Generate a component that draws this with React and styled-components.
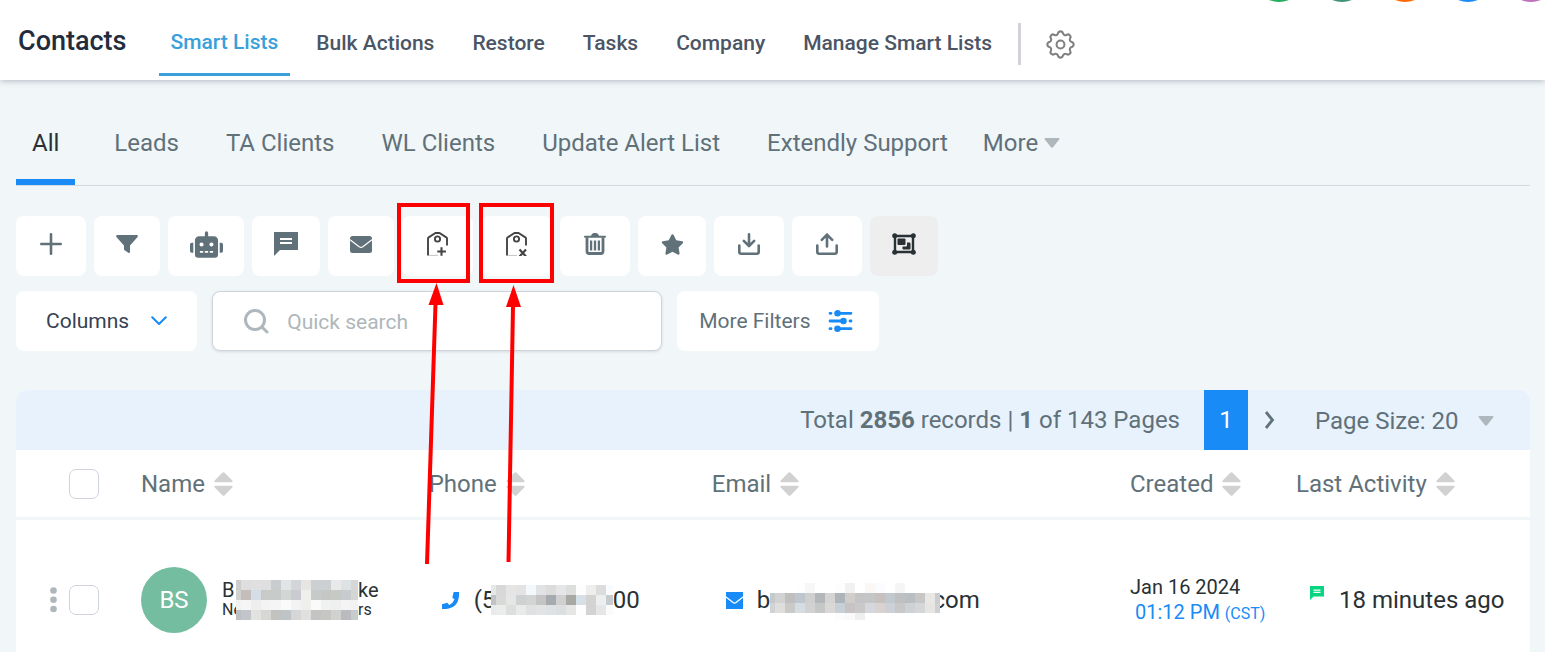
import React from "react";
import styled, { createGlobalStyle } from "styled-components";
import { FaRobot, FaStar } from "react-icons/fa";

const color = {
  page: "#f1f6f9",
  blue: "#188bf6",
  sky: "#38a0db",
  slate: "#607179",
  ink: "#2a3135",
  nav: "#4b5565",
  line: "#d3dadf",
  border: "#cfd3dc",
  muted: "#aeb7bb",
};

const GlobalStyle = createGlobalStyle`
  * { box-sizing: border-box; }
  body {
    margin: 0;
    background: ${color.page};
    color: ${color.slate};
    font-family: Roboto, "Liberation Sans", sans-serif;
    font-size: 24px;
    line-height: 28px;
  }
  button, input, select {
    font: inherit;
    color: inherit;
    margin: 0;
    padding: 0;
    border: 0;
    background: none;
  }
  a { color: inherit; text-decoration: none; }
  svg { display: block; flex: none; }
`;

const Shell = styled.div`
  position: relative;
  height: 100vh;
  overflow: hidden;
`;

/* ---------- header ---------- */

const Header = styled.header`
  position: relative;
  display: flex;
  align-items: center;
  height: 80px;
  padding: 0 18px;
  background: #fff;
  box-shadow: 0 1px 6px rgba(60, 75, 85, 0.35);
`;

const Title = styled.h1`
  margin: 0 32px 0 0;
  padding-top: 2px;
  color: #222c3c;
  font-size: 27px;
  font-weight: 500;
  line-height: 32px;
`;

const MainNav = styled.nav`
  display: flex;
  align-self: stretch;
  gap: 14px;
`;

const NavLink = styled.a`
  display: flex;
  align-items: center;
  height: 76px;
  padding: ${(p) => (p.$active ? 10 : 12)}px 12px 0;
  border-bottom: 3px solid ${(p) => (p.$active ? color.sky : "transparent")};
  color: ${(p) => (p.$active ? color.sky : color.nav)};
  font-size: 21px;
  font-weight: 500;
  line-height: 24px;
  white-space: nowrap;
`;

const Divider = styled.span`
  width: 3px;
  height: 42px;
  margin: 8px 22px 0 14px;
  background: #d1d3d8;
`;

const PlainButton = styled.button`
  display: inline-flex;
  align-items: center;
  cursor: pointer;
`;

const SettingsButton = styled(PlainButton)`
  margin-top: 8px;
`;

const TopActions = styled.div`
  position: absolute;
  top: 0;
  right: -10px;
  display: flex;
  align-items: flex-end;
  gap: 15px;
  height: 2px;
  overflow: hidden;
`;

const TopDot = styled.span`
  width: 48px;
  height: 48px;
  border-radius: 50%;
  background: ${(p) => p.$fill};
`;

/* ---------- list tabs ---------- */

const Main = styled.main`
  padding: 0 15px 0 16px;
`;

const Tabs = styled.nav`
  display: flex;
  gap: 15px;
  height: 106px;
  padding-top: 20px;
  border-bottom: 1px solid ${color.line};
`;

const Tab = styled.a`
  display: flex;
  align-items: center;
  padding: 6px 16px 0;
  margin-right: ${(p) => (p.$active ? 8 : 0)}px;
  border-bottom: 6px solid ${(p) => (p.$active ? color.blue : "transparent")};
  color: ${(p) => (p.$active ? color.ink : color.slate)};
  white-space: nowrap;
`;

const MoreTab = styled(PlainButton)`
  gap: 6px;
  padding-left: 4px;
`;

/* ---------- toolbars ---------- */

const Toolbar = styled.div`
  display: flex;
  gap: 8px;
  padding-top: 30px;
`;

const ToolButton = styled.button`
  display: flex;
  align-items: center;
  justify-content: center;
  width: ${(p) => p.$width}px;
  height: 60px;
  padding-bottom: 4px;
  border-radius: 8px;
  background: ${(p) => (p.$pressed ? "#eeeeee" : "#fff")};
  color: ${(p) => (p.$pressed ? color.ink : color.slate)};
  cursor: pointer;
`;

const FilterBar = styled.div`
  display: flex;
  gap: 15px;
  padding: 15px 0 39px;
`;

const WideButton = styled.button`
  display: flex;
  align-items: center;
  gap: ${(p) => p.$gap}px;
  height: 60px;
  padding: ${(p) => p.$pad};
  border-radius: 8px;
  background: #fff;
  color: ${(p) => p.$tone};
  font-size: 21px;
  line-height: 24px;
  white-space: nowrap;
  cursor: pointer;
`;

const SearchBox = styled.label`
  display: flex;
  align-items: center;
  gap: 18px;
  width: 450px;
  height: 60px;
  padding: 0 30px;
  border: 1px solid ${color.border};
  border-radius: 8px;
  background: #fff;
  box-shadow: 0 1px 3px rgba(60, 75, 85, 0.15);
`;

const SearchInput = styled.input`
  flex: 1;
  min-width: 0;
  padding-top: 2px;
  outline: none;
  font-size: 21px;
  line-height: 24px;
  &::placeholder {
    color: ${color.muted};
    opacity: 1;
  }
`;

/* ---------- table ---------- */

const Panel = styled.section`
  background: #fff;
  border-radius: 10px 10px 0 0;
  overflow: hidden;
`;

const PagerBar = styled.div`
  display: flex;
  align-items: center;
  justify-content: flex-end;
  height: 60px;
  padding-right: 36px;
  background: #e8f2fd;
`;

const PageNumber = styled.button`
  align-self: stretch;
  width: 44px;
  margin: 0 16px 0 24px;
  background: ${color.blue};
  color: #fff;
  cursor: pointer;
`;

const PageSize = styled.label`
  display: flex;
  align-items: center;
  gap: 19px;
  margin-left: 39px;
  padding-top: 2px;
`;

const PageSelect = styled.select`
  appearance: none;
  outline: none;
  cursor: pointer;
`;

const Table = styled.table`
  width: 100%;
  table-layout: fixed;
  border-spacing: 0;
`;

const Col = styled.col`
  width: ${(p) => p.$width};
`;

const HeadCell = styled.th`
  height: 70px;
  padding: 0 0 0 ${(p) => p.$indent || 0}px;
  border-bottom: 3px solid ${color.page};
  font-weight: 400;
  text-align: left;
  vertical-align: middle;
`;

const SortButton = styled(PlainButton)`
  gap: 9px;
  white-space: nowrap;
`;

const Cell = styled.td`
  height: 160px;
  padding: 0 0 0 ${(p) => p.$indent || 0}px;
  color: ${color.ink};
  vertical-align: middle;
  white-space: nowrap;
`;

const Line = styled.div`
  display: flex;
  align-items: ${(p) => (p.$top ? "flex-start" : "center")};
  gap: ${(p) => p.$gap || 0}px;
`;

const Check = styled.input`
  appearance: none;
  display: block;
  width: 30px;
  height: 30px;
  border: 1px solid ${color.border};
  border-radius: 7px;
  background: #fff;
  &:checked { background: ${color.blue}; }
`;

const Avatar = styled.span`
  display: flex;
  align-items: center;
  justify-content: center;
  width: 66px;
  height: 66px;
  border-radius: 50%;
  background: #74bda0;
  color: #fff;
`;

const NameText = styled.div`
  display: grid;
  grid-template-columns: 14px auto auto;
  grid-template-rows: 20px 20px;
  line-height: 20px;
`;

const MaskedBlock = styled.span`
  grid-row: 1 / span 2;
  grid-column: 2;
`;

const Patch = styled.svg`
  position: relative;
  z-index: 1;
`;

/* A piece of text that may run on under the patch beside it. */
const Piece = styled.span`
  display: flex;
  justify-content: ${(p) => (p.$end ? "flex-end" : "flex-start")};
  width: ${(p) => (p.$width ? p.$width + "px" : "auto")};
  font-size: ${(p) => p.$size || 24}px;
`;

const DateText = styled.div`
  font-size: 20px;
  line-height: 25px;
`;

const TimeText = styled(DateText)`
  padding-left: 5px;
  color: ${color.blue};
  small { font-size: 16px; }
`;

const Annotation = styled.svg`
  position: absolute;
  top: 0;
  left: 0;
  z-index: 2;
  pointer-events: none;
`;

/* ---------- icons ---------- */

const Caret = () => (
  <svg width="16" height="10" viewBox="0 0 16 10" fill={color.muted}>
    <path d="M1.5 0h13q1.6.2.7 1.6L9.2 9Q8 10.400 6.800 9L.8 1.600Q-.1.2 1.500 0z" />
  </svg>
);

const SortIcon = () => (
  <svg width="19" height="24" viewBox="0 0 19 24" fill="#d1d1d1">
    <path d="M8.300.8Q9.500-.3 10.700.8l7.600 7.700q.9 1.500-.7 1.800H1.400Q-.2 10 .7 8.500zM8.300 23.200q1.200 1.100 2.400 0l7.600-7.700q.9-1.500-.7-1.800H1.400q-1.600.3-.7 1.800z" />
  </svg>
);

const GearIcon = () => (
  <svg width="35" height="35" viewBox="0 0 24 24" fill="none" stroke="#808080" strokeWidth="1.400" strokeLinejoin="round">
    <path d="M10.325 4.317c.426-1.756 2.924-1.756 3.350 0a1.724 1.724 0 002.573 1.066c1.543-.94 3.310.826 2.370 2.370a1.724 1.724 0 001.065 2.572c1.756.426 1.756 2.924 0 3.350a1.724 1.724 0 00-1.066 2.573c.94 1.543-.826 3.310-2.370 2.370a1.724 1.724 0 00-2.572 1.065c-.426 1.756-2.924 1.756-3.350 0a1.724 1.724 0 00-2.573-1.066c-1.543.94-3.310-.826-2.370-2.370a1.724 1.724 0 00-1.065-2.572c-1.756-.426-1.756-2.924 0-3.350a1.724 1.724 0 001.066-2.573c-.94-1.543.826-3.310 2.370-2.370.996.608 2.296.07 2.572-1.065z" />
    <circle cx="12" cy="12" r="2.700" />
  </svg>
);

const PlusIcon = () => (
  <svg width="22" height="22" viewBox="0 0 22 22" stroke="currentColor" strokeWidth="2.600" strokeLinecap="round">
    <path d="M11 1.300v19.400M1.300 11h19.400" />
  </svg>
);

const FunnelIcon = () => (
  <svg width="22" height="18" viewBox="0 0 22 18" fill="currentColor">
    <path d="M1 0h20q1.300.6.6 1.900L14 10.500V17q-.3 1.400-1.600.7L8.600 15.200Q8 14.800 8 14v-3.500L.4 1.900Q-.3.6 1 0z" />
  </svg>
);

const MessageIcon = ({ size, fill }) => (
  <svg width={size} height={size} viewBox="0 0 24 24" fill={fill || "currentColor"}>
    <path d="M0 0h24v18H6l-6 6z" />
    <path d="M6 7h12M6 11h12" stroke="#fff" strokeWidth="2" />
  </svg>
);

const EnvelopeIcon = () => (
  <svg width="22" height="17" viewBox="0 0 22 17">
    <rect width="22" height="17" rx="2.500" fill="currentColor" />
    <path d="M0 3.800l9.200 7q1.800 1.300 3.600 0l9.200-7" fill="none" stroke="#fff" strokeWidth="1.200" />
  </svg>
);

const TagIcon = ({ mark }) => (
  <svg width="23" height="24" viewBox="0 0 23 24" fill="none" stroke="#454545" strokeWidth="1.900">
    <path d="M2 23.500V6.600Q2 5.800 2.700 5.400L9.500 1h4l6.800 4.400q.7.400.7 1.200V13.500" />
    <circle cx="11.500" cy="7" r="2.600" />
    <path d="M3 23.400h9" strokeWidth="1" stroke="#c4c4c4" />
    {mark === "plus" ? (
      <path d="M15.500 15.300v8.400M11.300 19.500h8.600" strokeWidth="2.100" />
    ) : (
      <path d="M14.500 17.500l6.500 7M21 17.500l-6.500 7" strokeWidth="2.200" />
    )}
  </svg>
);

const TrashIcon = () => (
  <svg width="22" height="22" viewBox="0 0 22 22" fill="none" stroke="currentColor">
    <path d="M1 3.800h20" strokeWidth="2" strokeLinecap="round" />
    <path d="M7.500 3.500Q7.800.5 9.500.5h3q1.700 0 2 3z" fill="currentColor" />
    <path d="M3 4.500v13.700q0 2.300 2.300 2.300h11.400q2.300 0 2.300-2.300V4.500" strokeWidth="2.800" />
    <path d="M7.100 7.500v10M11 7.500v10M14.900 7.500v10" strokeWidth="2.300" />
  </svg>
);

const TransferIcon = ({ up }) => (
  <svg width="22" height="22" viewBox="0 0 22 22" fill="none" stroke="currentColor" strokeWidth="2.600" strokeLinecap="round" strokeLinejoin="round">
    <path d="M1.300 12.500v6.200q0 2 2 2h15.400q2 0 2-2v-6.200" />
    <path d={up ? "M11 13.500V1.600M5.800 6.800L11 1.600l5.200 5.200" : "M11 1.300v11.800M5.800 7.800L11 13l5.200-5.200"} />
  </svg>
);

const GroupIcon = () => (
  <svg width="24" height="22" viewBox="0 0 24 22" fill="currentColor">
    <path d="M3 3h18v16H3z" fill="none" stroke="currentColor" strokeWidth="2.400" />
    <circle cx="2.700" cy="2.700" r="2.500" />
    <circle cx="21.300" cy="2.700" r="2.500" />
    <circle cx="2.700" cy="19.300" r="2.500" />
    <circle cx="21.300" cy="19.300" r="2.500" />
    <rect x="5.500" y="5.500" width="8" height="6.500" rx="1" />
    <path d="M15 9.500h2.500q1 0 1 1v5q0 1-1 1h-6q-1 0-1-1V13.500H14q1 0 1-1z" />
  </svg>
);

const ChevronDown = () => (
  <svg width="16" height="10" viewBox="0 0 16 10" fill="none" stroke={color.blue} strokeWidth="2" strokeLinecap="round" strokeLinejoin="round">
    <path d="M1.200 1.200L8 8l6.800-6.800" />
  </svg>
);

const ChevronRight = () => (
  <svg width="12" height="18" viewBox="0 0 12 18" fill="none" stroke={color.slate} strokeWidth="2.800">
    <path d="M2 1l6.500 8L2 17" />
  </svg>
);

const SearchIcon = () => (
  <svg width="26" height="26" viewBox="0 0 26 26" fill="none" stroke={color.muted} strokeWidth="3" strokeLinecap="round">
    <circle cx="12" cy="12" r="9.500" />
    <path d="M19 19l5 5" />
  </svg>
);

const SlidersIcon = () => (
  <svg width="25" height="22" viewBox="0 0 25 22" fill={color.blue} stroke={color.blue} strokeWidth="2.800" strokeLinecap="round">
    <path d="M2 3.300h1M10 3.300h13M2 11h13M22 11h1M2 18.700h1M10 18.700h13" />
    <circle cx="9.500" cy="3.300" r="1.900" />
    <circle cx="15.500" cy="11" r="1.900" />
    <circle cx="9.500" cy="18.700" r="1.900" />
  </svg>
);

const DotsIcon = () => (
  <svg width="7" height="26" viewBox="0 0 7 26" fill={color.muted}>
    <circle cx="3.500" cy="3.500" r="3.300" />
    <circle cx="3.500" cy="12.700" r="3.300" />
    <circle cx="3.500" cy="22" r="3.300" />
  </svg>
);

const PhoneIcon = () => (
  <svg width="17" height="17" viewBox="0 0 17 17" fill={color.blue}>
    <path d="M11.700 0H17v3.600Q16.400 15.800 4 17H0v-4.700l5.300-1.500 1.900 2.200q3.600-1.700 5.300-5.600L10.300 5.500z" />
  </svg>
);

const MailIcon = () => (
  <svg width="17" height="17" viewBox="0 0 17 17">
    <path d="M0 0h17v17H0z" fill={color.blue} />
    <path d="M0 5l7 5.500q1.500 1.100 3 0L17 5" fill="none" stroke="#fff" strokeWidth="1.300" />
  </svg>
);

/* A pixelated patch that hides private data; each row is a list of cell colours. */
const Mosaic = ({ rows, last, top = 0 }) => {
  const width = 5 + (rows[0].length - 2) * 10 + last;
  const height = rows.length * 10;
  return (
    <Patch width={width} height={height} viewBox={`0 ${-top} ${width} ${height}`} shapeRendering="crispEdges">
      {rows.map((row, r) =>
        row.map((fill, c) => (
          <rect
            key={r + "-" + c}
            x={c === 0 ? 0 : c * 10 - 5}
            y={r * 10}
            width={c === 0 ? 5 : c === row.length - 1 ? last : 10}
            height="10"
            fill={"#" + fill}
          />
        ))
      )}
    </Patch>
  );
};

const cells = (text) => text.split(" ");

const nameCells = [
  cells("cdcecb dededf e0e0e1 dedfe1 c8cccd e1e5e6 d3d5d9 e6e5e1 cdd0d2 cdd0d3 e8e9e8 dde2e5 d6d7d6"),
  cells("d0d2cf c3bebb d5dde6 c8cac8 c7cbc9 d3d7d3 cacbd1 efefee c8cac9 c5c7c4 c7c9c5 c8cbce d5d6d4"),
  cells("f2f4f2 f5f5f6 edefef f2f3f2 f5f5f5 f9fafa f3f3f3 efefec fafafa f0f1f1 efefef f4f4f4 f2f2f2"),
  cells("bcc0c2 c2c5c9 e2e3e1 d7d8d6 c2c3c0 bfc4c8 d6d6d6 e0e0e0 c4c4c3 c6c7c5 d1d2cf b9bbbf c6cbcd"),
];

const phoneCells = [
  cells("e6e7e7 d8d8d8 e5e5e5 e3e3e3 f3f8fc e0e2e3 dcdcdd e6e6e8 dcdedb fdfdfd eeefed dcdcdc f9fbfc"),
  cells("bfc3c6 d9d9d7 e5e7e6 cdd1d2 d2d4d4 c4c4c4 a5abae cfd0cf a9a9a4 d8e0e7 d3d3d2 edeef0 c5cbce"),
  cells("e9eaea ebecec dededd e9ebea e1e1e1 e2e3e5 dfe2e4 dcdfe1 e6e6e5 fefefe d3d3d3 e6e6e6 fafcfc"),
];

const emailCells = [
  cells("fff fff fff fefefc f7f7f7 fff fff fdfdfd f1f1f2 fff faf7f4 fafcff fff f5f5f5 fff fff fff fff"),
  cells("c4c9cb d2d2d2 bfbfbf bfc6ce cfcfcf b3b7b9 d5d4d2 adb5bb d0cdcb c2c4c6 c3c5c6 c6c1bf c2c9ce bfc0c1 b8bec2 c8c7c6 e9e8e5 c9cdcf"),
  cells("cfd3d5 dfdedd c9c9c8 d6dde0 d2d2d2 c6c7c7 d9d8d6 c8d0d7 c7c3c5 c9c9c9 d5d7dc d8d3d1 cdd0d5 c8c8c8 cfd2d4 d5d6d8 e7e5e1 ccd1d3"),
  cells("fff fff fff fff fff fff fff fcfcfc fafafa eeeff0 fff fff fff fff fff fff fff fff"),
];

/* ---------- data ---------- */

const navItems = ["Smart Lists", "Bulk Actions", "Restore", "Tasks", "Company", "Manage Smart Lists"];
const tabItems = ["All", "Leads", "TA Clients", "WL Clients", "Update Alert List", "Extendly Support"];
const topDots = ["#24ad5c", "#3f9377", "#ff6a00", "#188bf6", "#c070bd"];

const tools = [
  { label: "Add contact", width: 70, icon: <PlusIcon /> },
  { label: "Filter", width: 66, icon: <FunnelIcon /> },
  { label: "Automation", width: 76, icon: <FaRobot size={33} /> },
  { label: "Send SMS", width: 68, icon: <MessageIcon size={24} /> },
  { label: "Send email", width: 66, icon: <EnvelopeIcon /> },
  { label: "Add tag", width: 71, icon: <TagIcon mark="plus" /> },
  { label: "Remove tag", width: 71, icon: <TagIcon mark="cross" /> },
  { label: "Delete", width: 70, icon: <TrashIcon /> },
  { label: "Review request", width: 68, icon: <FaStar size={23} /> },
  { label: "Export", width: 70, icon: <TransferIcon /> },
  { label: "Import", width: 70, icon: <TransferIcon up /> },
  { label: "Merge", width: 68, icon: <GroupIcon />, pressed: true },
];

const columns = ["Name", "Phone", "Email", "Created", "Last Activity"];

export default function App() {
  return (
    <>
      <GlobalStyle />
      <Shell>
        <Header>
          <Title>Contacts</Title>
          <MainNav>
            {navItems.map((item, i) => (
              <NavLink key={item} href="#" $active={i === 0}>{item}</NavLink>
            ))}
          </MainNav>
          <Divider />
          <SettingsButton aria-label="Settings"><GearIcon /></SettingsButton>
          <TopActions>
            {topDots.map((fill) => <TopDot key={fill} $fill={fill} />)}
          </TopActions>
        </Header>

        <Main>
          <Tabs>
            {tabItems.map((item, i) => (
              <Tab key={item} href="#" $active={i === 0}>{item}</Tab>
            ))}
            <MoreTab>More <Caret /></MoreTab>
          </Tabs>

          <Toolbar>
            {tools.map((t) => (
              <ToolButton key={t.label} aria-label={t.label} $width={t.width} $pressed={t.pressed}>
                {t.icon}
              </ToolButton>
            ))}
          </Toolbar>

          <FilterBar>
            <WideButton $gap={22} $pad="0 30px" $tone="#364152">Columns <ChevronDown /></WideButton>
            <SearchBox>
              <SearchIcon />
              <SearchInput type="text" placeholder="Quick search" aria-label="Quick search" />
            </SearchBox>
            <WideButton $gap={17} $pad="0 26px 0 22px" $tone={color.slate}>More Filters <SlidersIcon /></WideButton>
          </FilterBar>

          <Panel>
            <PagerBar>
              <span>Total <b>2856</b> records | <b>1</b> of 143 Pages</span>
              <PageNumber>1</PageNumber>
              <PlainButton aria-label="Next page"><ChevronRight /></PlainButton>
              <PageSize>
                <PageSelect aria-label="Page size">
                  <option>Page Size: 20</option>
                </PageSelect>
                <Caret />
              </PageSize>
            </PagerBar>

            <Table>
              <colgroup>
                <Col $width="125px" />
                <Col $width="19%" />
                <Col $width="18.7%" />
                <Col $width="auto" />
                <Col $width="166px" />
                <Col $width="234px" />
              </colgroup>
              <thead>
                <tr>
                  <HeadCell $indent={53}><Check type="checkbox" aria-label="Select all" /></HeadCell>
                  {columns.map((c) => (
                    <HeadCell key={c}><SortButton>{c} <SortIcon /></SortButton></HeadCell>
                  ))}
                </tr>
              </thead>
              <tbody>
                <tr>
                  <Cell $indent={34}>
                    <Line $gap={12}>
                      <PlainButton aria-label="Row actions"><DotsIcon /></PlainButton>
                      <Check type="checkbox" aria-label="Select contact" />
                    </Line>
                  </Cell>
                  <Cell>
                    <Line $gap={15}>
                      <Avatar>BS</Avatar>
                      <NameText>
                        <Piece $size={20}>B</Piece>
                        <Piece $size={20}>ke</Piece>
                        <MaskedBlock><Mosaic rows={nameCells} last={7} /></MaskedBlock>
                        <Piece $size={16}>Ne</Piece>
                        <Piece $size={16}>rs</Piece>
                      </NameText>
                    </Line>
                  </Cell>
                  <Cell $indent={13}>
                    <Line $gap={15}>
                      <PhoneIcon />
                      <Line>
                        <Piece $width={17}>(5</Piece>
                        <Mosaic rows={phoneCells} last={7} />
                        <Piece>00</Piece>
                      </Line>
                    </Line>
                  </Cell>
                  <Cell $indent={14}>
                    <Line $gap={14}>
                      <MailIcon />
                      <Line>
                        <Piece $width={13}>b</Piece>
                        <Mosaic rows={emailCells} last={5} top={3} />
                        <Piece $end $width={40}>com</Piece>
                      </Line>
                    </Line>
                  </Cell>
                  <Cell>
                    <DateText>Jan 16 2024</DateText>
                    <TimeText>01:12 PM <small>(CST)</small></TimeText>
                  </Cell>
                  <Cell $indent={14}>
                    <Line $gap={15} $top>
                      <MessageIcon size={14} fill="#07d57f" />
                      18 minutes ago
                    </Line>
                  </Cell>
                </tr>
              </tbody>
            </Table>
          </Panel>
        </Main>

        <Annotation width="600" height="600" viewBox="0 0 600 600" aria-hidden="true">
          <g fill="none" stroke="#f00" strokeWidth="4">
            <path d="M399 205h69v76h-69zM481 205h71v76h-71z" />
            <path d="M427 564l8.500-260M508.500 562l4.500-256" />
          </g>
          <path d="M436.500 283l7 22h-15zM513.500 285l7.500 22h-15z" fill="#f00" />
        </Annotation>
      </Shell>
    </>
  );
}
